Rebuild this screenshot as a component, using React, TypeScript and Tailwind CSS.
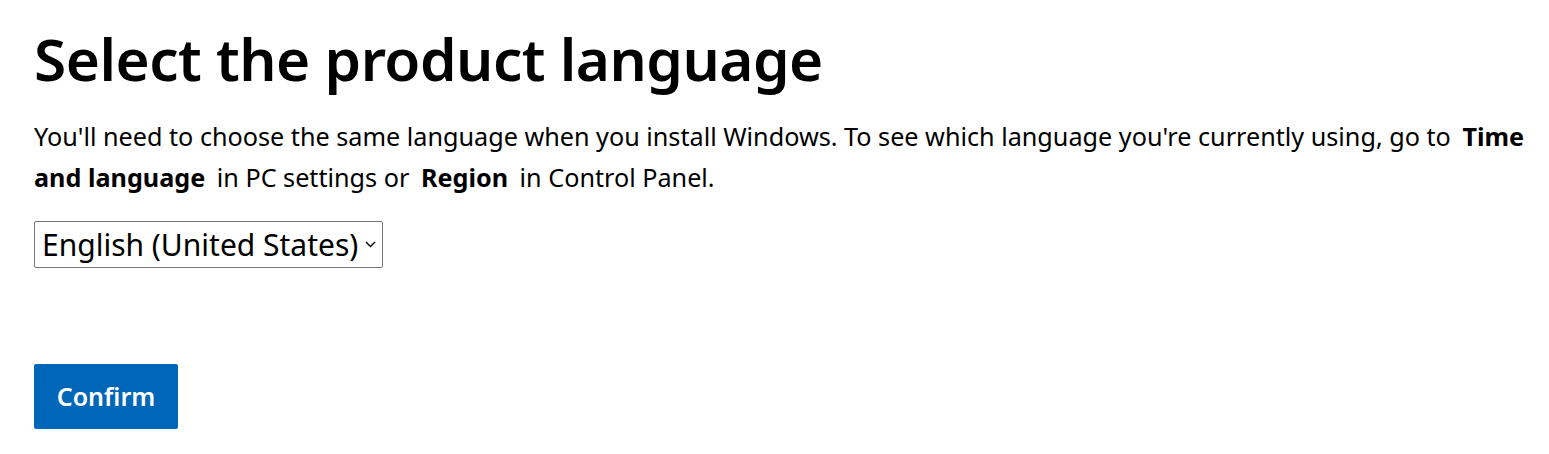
import React, { useState } from 'react';

const font = { fontFamily: '"Noto Sans", "Open Sans", sans-serif' };

const App: React.FC = () => {
    const [lang, setLang] = useState('en-US');

    return (
        <div className="min-h-screen bg-white text-black pl-[34px] pr-[10px]" style={font}>
            <h1 className="pt-[19px] text-[58.5px] leading-[78px] font-semibold tracking-[-0.5px]">
                Select the product language
            </h1>
            <p className="mt-[19px] text-[25.2px] leading-[41px]">
                You'll need to choose the same language when you install Windows. To see which language you're currently using, go to{' '}
                <strong className="font-bold ml-[5px] mr-[5px]">Time<br />and language</strong> in PC settings or{' '}
                <strong className="font-bold ml-[5px] mr-[5px]">Region</strong> in Control Panel.
            </p>
            <div className="mt-[23px]">
                <div className="relative inline-flex w-[349px] h-[47px] items-center border border-[#767676] rounded-[2px]">
                    <select
                        value={lang}
                        onChange={e => setLang(e.target.value)}
                        className="appearance-none w-full h-full bg-transparent pl-[7px] pr-[20px] text-[30px] text-black outline-none"
                        style={font}
                    >
                        <option value="en-US">English (United States)</option>
                        <option value="en-GB">English (United Kingdom)</option>
                        <option value="de-DE">German</option>
                        <option value="fr-FR">French</option>
                    </select>
                    <svg className="absolute right-[6px] top-[19px] pointer-events-none" width="11" height="7" viewBox="0 0 11 7" fill="none">
                        <path d="M1 1l4.5 4.5L10 1" stroke="#000" strokeWidth="1.4" />
                    </svg>
                </div>
            </div>
            <button className="mt-[96px] w-[144px] h-[65px] bg-[#0067b8] text-white text-[25px] font-semibold rounded-[2px]">
                Confirm
            </button>
        </div>
    );
};

export default App;
